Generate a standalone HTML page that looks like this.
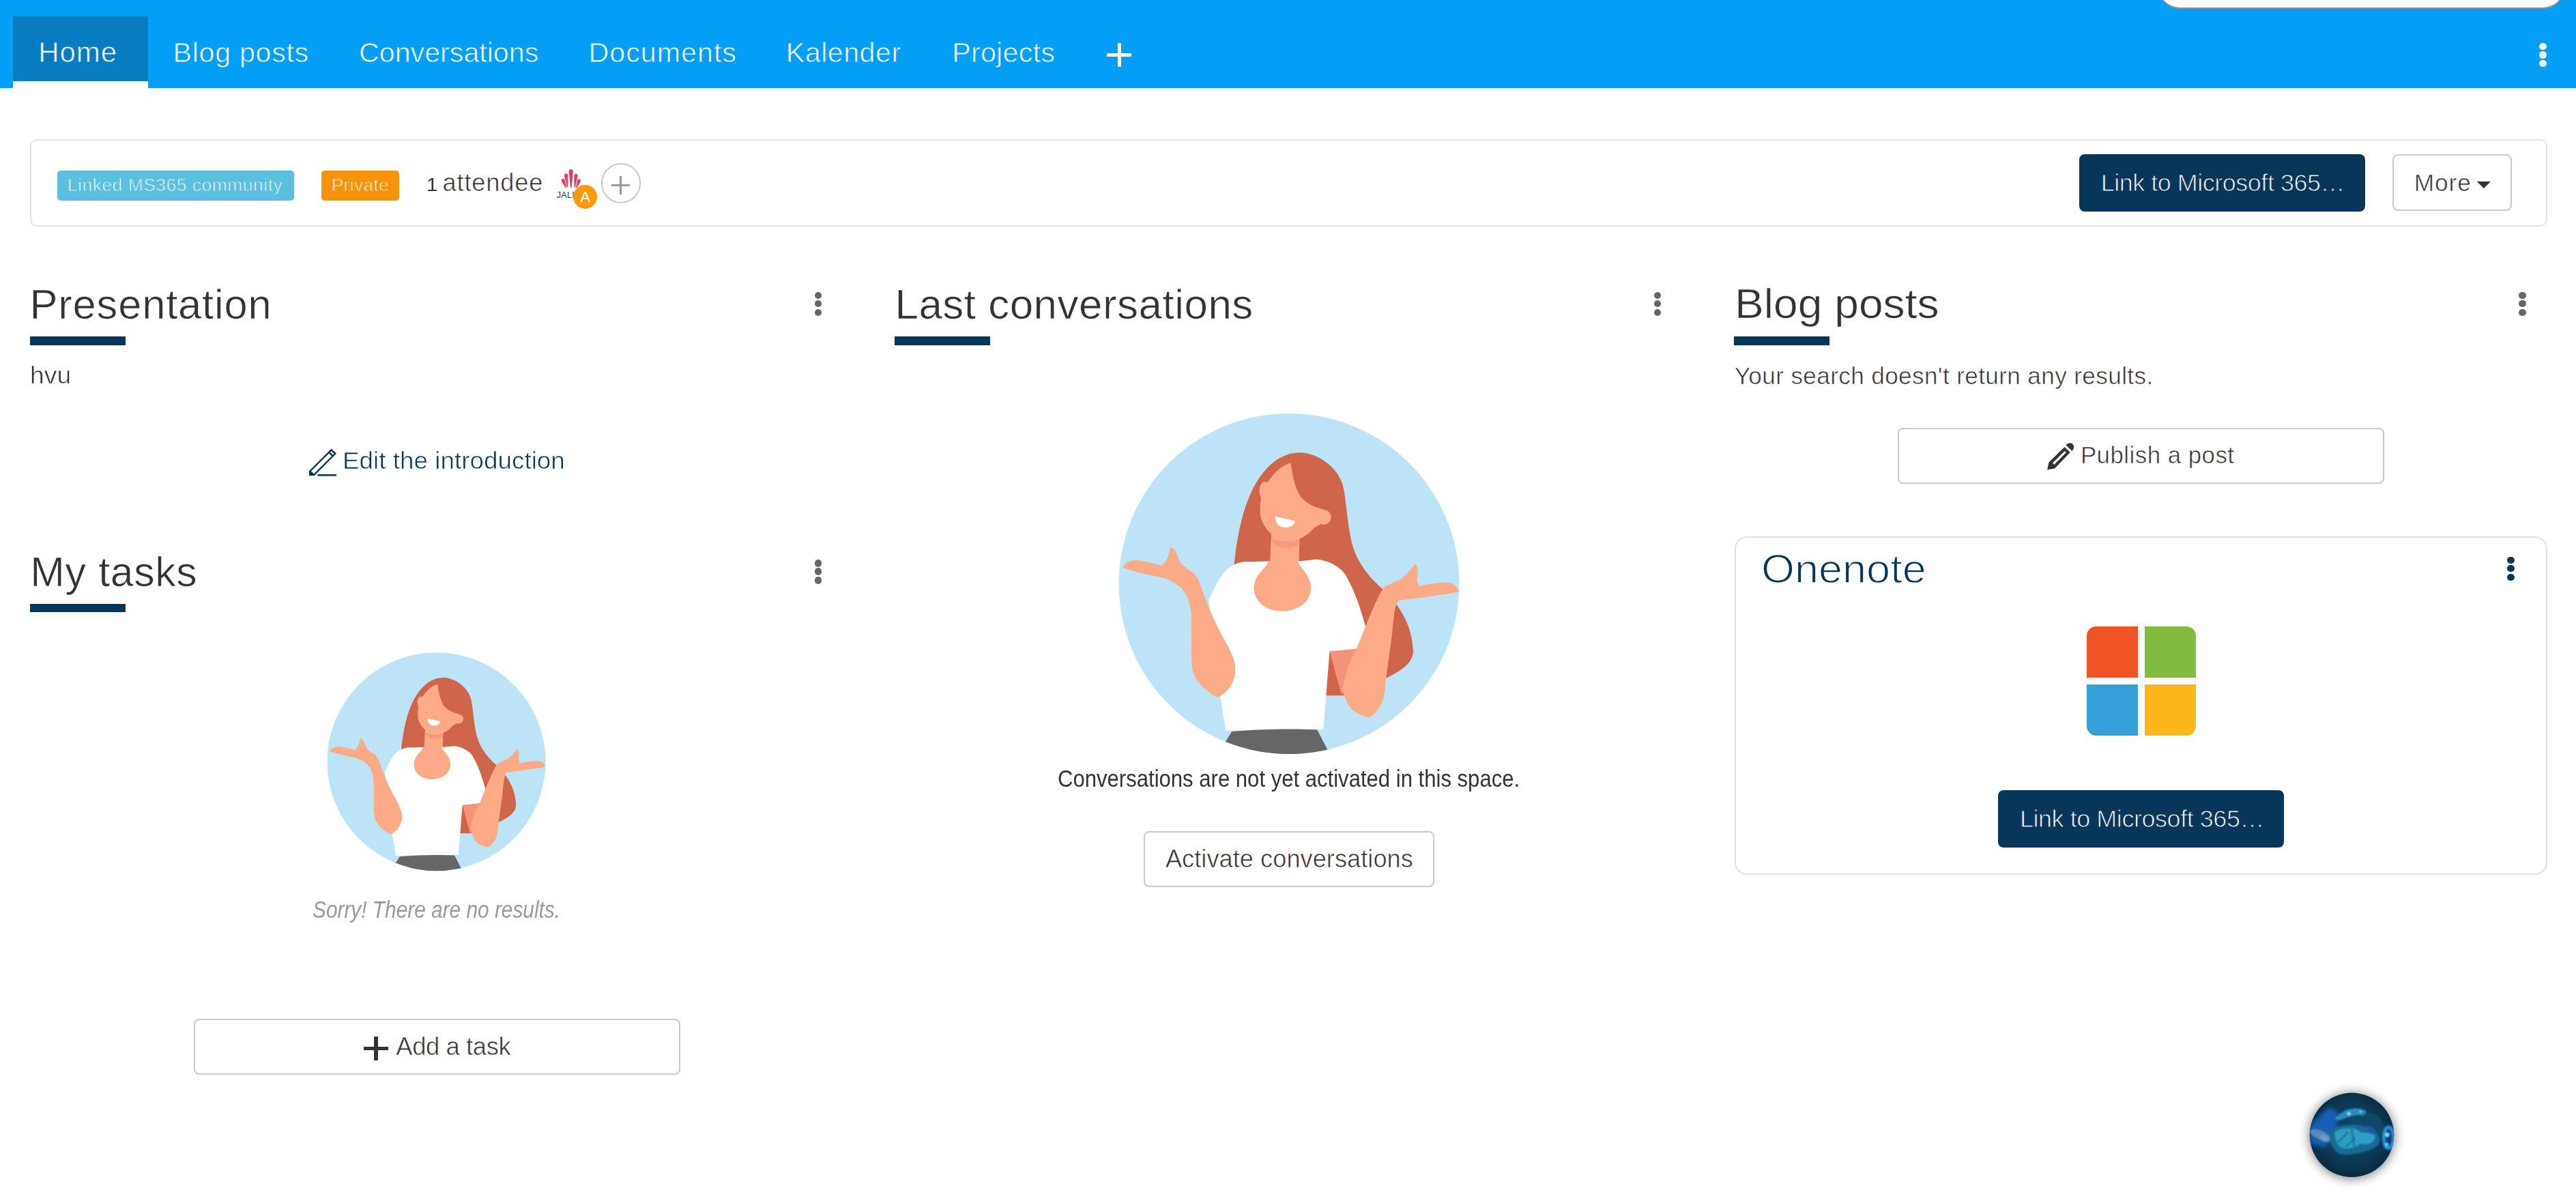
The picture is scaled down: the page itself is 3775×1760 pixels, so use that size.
<!DOCTYPE html>
<html><head><meta charset="utf-8"><title>Space home</title><style>
html,body{margin:0;padding:0;width:3775px;height:1760px;overflow:hidden;background:#fff;font-family:"Liberation Sans",sans-serif;}
.a{position:absolute}
.t{position:absolute;white-space:nowrap;font-family:"Liberation Sans",sans-serif;}
</style></head><body>
<div class="a" style="left:0px;top:0px;width:3775px;height:129px;background:#039ef5;"></div>
<div class="a" style="left:19px;top:24px;width:198px;height:95px;background:#077cc0;"></div>
<div class="a" style="left:19px;top:119px;width:198px;height:10px;background:#fff;"></div>
<div class="t" style="left:56.22px;top:55.82px;font-size:41.96px;line-height:41.96px;color:#fff;letter-spacing:0.95px;-webkit-text-stroke:0.8px #077cc0;">Home</div>
<div class="t" style="left:253.58px;top:56.58px;font-size:41.24px;line-height:41.24px;color:#fff;letter-spacing:0.68px;-webkit-text-stroke:0.8px #039ef5;">Blog posts</div>
<div class="t" style="left:526.07px;top:56.58px;font-size:41.24px;line-height:41.24px;color:#fff;letter-spacing:-0.03px;-webkit-text-stroke:0.8px #039ef5;">Conversations</div>
<div class="t" style="left:862.58px;top:56.58px;font-size:41.24px;line-height:41.24px;color:#fff;letter-spacing:0.98px;-webkit-text-stroke:0.8px #039ef5;">Documents</div>
<div class="t" style="left:1151.78px;top:56.58px;font-size:41.24px;line-height:41.24px;color:#fff;letter-spacing:0.47px;-webkit-text-stroke:0.8px #039ef5;">Kalender</div>
<div class="t" style="left:1395.18px;top:56.58px;font-size:41.24px;line-height:41.24px;color:#fff;letter-spacing:0.25px;-webkit-text-stroke:0.8px #039ef5;">Projects</div>
<div class="a" style="left:1622px;top:78px;width:36px;height:5px;background:#fff;"></div>
<div class="a" style="left:1637.5px;top:63px;width:5.5px;height:35px;background:#fff;"></div>
<div class="a" style="left:3721.2px;top:62.6px;width:10.8px;height:10.8px;border-radius:50%;background:#fff"></div>
<div class="a" style="left:3721.2px;top:75.1px;width:10.8px;height:10.8px;border-radius:50%;background:#fff"></div>
<div class="a" style="left:3721.2px;top:87.6px;width:10.8px;height:10.8px;border-radius:50%;background:#fff"></div>
<div class="a" style="left:3161px;top:-58.5px;width:599px;height:71px;background:#fff;border:2px solid #8f8f8f;border-top:none;box-sizing:border-box;border-radius:0 0 34px 34px"></div>
<div class="a" style="left:44px;top:204px;width:3689px;height:128px;background:#fff;border-radius:10px;border:2px solid #e3e3e3;box-sizing:border-box;"></div>
<div class="a" style="left:84px;top:250px;width:347px;height:44px;background:#5bbfdf;border-radius:5px;"></div>
<div class="a" style="left:471px;top:250px;width:114px;height:44px;background:#f7930b;border-radius:5px;"></div>
<div class="t" style="left:98.83px;top:257.67px;font-size:26.45px;line-height:26.45px;color:#fff;letter-spacing:0.51px;-webkit-text-stroke:0.9px #5bbfdf;">Linked MS365 community</div>
<div class="t" style="left:485.63px;top:257.67px;font-size:26.45px;line-height:26.45px;color:#fff;letter-spacing:0.35px;-webkit-text-stroke:0.9px #f7930b;">Private</div>
<div class="t" style="left:624.54px;top:257.42px;font-size:28.16px;line-height:28.16px;color:#333;transform:scaleX(1.0580);transform-origin:-0px 0;">1</div>
<div class="t" style="left:648.47px;top:250.40px;font-size:36.21px;line-height:36.21px;color:#333;letter-spacing:0.87px;-webkit-text-stroke:0.6px #fff;">attendee</div>
<svg class="a" style="left:810px;top:240px" width="70" height="70" viewBox="0 0 70 70">
<g fill="#e4405f"><path d="M26.00,35.00 L27.60,35.00 L29.90,11.20 L29.79,10.40 L29.48,9.65 L28.99,9.01 L28.35,8.52 L27.60,8.21 L26.80,8.10 L26.00,8.21 L25.25,8.52 L24.61,9.01 L24.12,9.65 L23.81,10.40 L23.70,11.20 Z"/><path d="M20.80,34.58 L22.20,34.42 L22.28,16.71 L22.12,16.02 L21.78,15.41 L21.29,14.90 L20.69,14.53 L20.01,14.33 L19.31,14.32 L18.62,14.48 L18.01,14.82 L17.50,15.31 L17.13,15.91 L16.93,16.59 L16.92,17.29 Z"/><path d="M18.59,35.23 L19.81,34.77 L17.63,23.57 L17.31,22.98 L16.84,22.48 L16.26,22.13 L15.61,21.93 L14.93,21.91 L14.27,22.07 L13.68,22.39 L13.18,22.86 L12.83,23.44 L12.63,24.09 L12.61,24.77 L12.77,25.43 Z"/><path d="M31.50,34.43 L32.90,34.57 L36.68,17.78 L36.67,17.08 L36.47,16.40 L36.10,15.80 L35.59,15.32 L34.97,14.98 L34.28,14.82 L33.58,14.83 L32.90,15.03 L32.30,15.40 L31.82,15.91 L31.48,16.53 L31.32,17.22 Z"/><path d="M33.90,34.76 L35.10,35.24 L40.91,25.97 L41.08,25.31 L41.07,24.63 L40.89,23.98 L40.54,23.39 L40.06,22.92 L39.47,22.59 L38.81,22.42 L38.13,22.43 L37.48,22.61 L36.89,22.96 L36.42,23.44 L36.09,24.03 Z"/></g>
<text x="5.8" y="49.5" font-family="Liberation Sans" font-size="12.5" fill="#0b3a66" letter-spacing="0.3">JALI</text>
<circle cx="47.5" cy="48.4" r="17.5" fill="#fb9a0b"/>
<text x="47.5" y="55.8" text-anchor="middle" font-family="Liberation Sans" font-size="22" fill="#fff">A</text>
</svg>
<div class="a" style="left:880.5px;top:239px;width:58.5px;height:58.5px;border:2px solid #c9c9c9;border-radius:50%;box-sizing:border-box"></div>
<div class="a" style="left:896px;top:269.5px;width:27px;height:3.2px;background:#999;"></div>
<div class="a" style="left:908px;top:258px;width:3.2px;height:27px;background:#999;"></div>
<div class="a" style="left:3047px;top:226px;width:419px;height:84px;background:#07365b;border-radius:8px;"></div>
<div class="t" style="left:3078.69px;top:249.51px;font-size:35.98px;line-height:35.98px;color:#fff;letter-spacing:-0.48px;-webkit-text-stroke:1.0px #07365b;">Link to Microsoft 365…</div>
<div class="a" style="left:3506px;top:226px;width:175px;height:83px;background:#fff;border-radius:8px;border:2px solid #c9c9c9;box-sizing:border-box;"></div>
<div class="t" style="left:3537.64px;top:250.06px;font-size:35.27px;line-height:35.27px;color:#333;letter-spacing:0.98px;-webkit-text-stroke:0.6px #fff;">More</div>
<svg class="a" style="left:3629px;top:265px" width="22" height="12" viewBox="0 0 22 12"><path d="M0.8,1 L21,1 L10.9,11 Z" fill="#333"/></svg>
<div class="t" style="left:43.50px;top:414.98px;font-size:61.44px;line-height:61.44px;color:#333;letter-spacing:0.83px;-webkit-text-stroke:0.6px #fff;">Presentation</div>
<div class="t" style="left:44.26px;top:807.64px;font-size:60.73px;line-height:60.73px;color:#333;letter-spacing:0.70px;-webkit-text-stroke:0.6px #fff;">My tasks</div>
<div class="t" style="left:1311.47px;top:414.97px;font-size:61.87px;line-height:61.87px;color:#333;letter-spacing:0.53px;-webkit-text-stroke:0.6px #fff;">Last conversations</div>
<div class="t" style="left:2541.72px;top:415.42px;font-size:61.16px;line-height:61.16px;color:#333;transform:scaleX(1.0489);transform-origin:-0px 0;-webkit-text-stroke:0.6px #fff;">Blog posts</div>
<div class="a" style="left:44px;top:493px;width:140px;height:13px;background:#07365b;"></div>
<div class="a" style="left:44px;top:885px;width:140px;height:12px;background:#07365b;"></div>
<div class="a" style="left:1311px;top:493px;width:140px;height:13px;background:#07365b;"></div>
<div class="a" style="left:2541px;top:493px;width:140px;height:13px;background:#07365b;"></div>
<div class="a" style="left:1193.8px;top:427.8px;width:10.4px;height:10.4px;border-radius:50%;background:#666"></div>
<div class="a" style="left:1193.8px;top:439.8px;width:10.4px;height:10.4px;border-radius:50%;background:#666"></div>
<div class="a" style="left:1193.8px;top:452.8px;width:10.4px;height:10.4px;border-radius:50%;background:#666"></div>
<div class="a" style="left:1193.8px;top:820.3px;width:10.4px;height:10.4px;border-radius:50%;background:#666"></div>
<div class="a" style="left:1193.8px;top:832.3px;width:10.4px;height:10.4px;border-radius:50%;background:#666"></div>
<div class="a" style="left:1193.8px;top:845.3px;width:10.4px;height:10.4px;border-radius:50%;background:#666"></div>
<div class="a" style="left:2423.8px;top:427.8px;width:10.4px;height:10.4px;border-radius:50%;background:#666"></div>
<div class="a" style="left:2423.8px;top:439.8px;width:10.4px;height:10.4px;border-radius:50%;background:#666"></div>
<div class="a" style="left:2423.8px;top:452.8px;width:10.4px;height:10.4px;border-radius:50%;background:#666"></div>
<div class="a" style="left:3691.3px;top:427.8px;width:10.4px;height:10.4px;border-radius:50%;background:#666"></div>
<div class="a" style="left:3691.3px;top:439.8px;width:10.4px;height:10.4px;border-radius:50%;background:#666"></div>
<div class="a" style="left:3691.3px;top:452.8px;width:10.4px;height:10.4px;border-radius:50%;background:#666"></div>
<div class="t" style="left:43.82px;top:533.07px;font-size:34.86px;line-height:34.86px;color:#333;transform:scaleX(1.0698);transform-origin:-0px 0;-webkit-text-stroke:0.6px #fff;">hvu</div>
<svg class="a" style="left:445px;top:650px" width="60" height="55" viewBox="0 0 60 55">
<path d="M9.2,40.5 L40.5,9.3 L46.4,14.6 L15,46 Z" fill="none" stroke="#07365b" stroke-width="2.4" stroke-linejoin="miter"/>
<path d="M8,40 L8,47 L15.5,47 Z" fill="#07365b"/>
<line x1="36.8" y1="12.6" x2="42.8" y2="18.3" stroke="#07365b" stroke-width="2.4"/>
<line x1="20.5" y1="46.3" x2="48" y2="46.3" stroke="#07365b" stroke-width="2.6"/>
</svg>
<div class="t" style="left:502.22px;top:658.26px;font-size:34.28px;line-height:34.28px;color:#07365b;transform:scaleX(1.0759);transform-origin:-0px 0;-webkit-text-stroke:0.6px #fff;">Edit the introduction</div>
<svg class="a" style="left:467.21px;top:946.33px" width="346.09" height="333.32" viewBox="0 0 1247 1201"><defs><clipPath id="c1"><circle cx="621.5" cy="613.5" r="576.5"/></clipPath></defs>
<circle cx="621.5" cy="613.5" r="576.5" fill="#bde3f7"/>
<g clip-path="url(#c1)">
<path fill="#cf654b" d="M435,556 C445,450 465,360 500,290 C540,215 590,172 654,169 C720,168 790,220 805,285 C815,330 818,400 832,466 C845,520 870,570 941,634 C1000,690 1040,760 1042,843 C1040,880 1010,905 941,938 C900,960 850,980 806,992 L748,992 L700,560 Z"/>
<path fill="#fdab87" d="M562,440 L658,440 L655,545 L557,545 Z"/>
<path fill="#f59a7c" d="M566,460 C590,472 640,472 657,452 L656,478 C640,492 610,496 585,488 C575,482 569,476 566,470 Z"/>
<path fill="#fdab87" d="M550,268 C575,232 600,212 628,204 C632,245 642,290 662,320 C685,345 712,356 742,362 C748,395 735,410 708,423 C680,455 650,470 616,470 C590,470 575,460 562,446 C535,420 524,395 524,370 C522,330 532,292 550,268 Z"/>
<ellipse cx="540" cy="300" rx="19" ry="32" fill="#fdab87"/>
<circle cx="739" cy="388" r="25" fill="#fdab87"/>
<path fill="#fff" d="M574,385 L643,401 C640,420 612,428 593,420 C580,413 575,400 574,385 Z"/>
<path fill="#fff" d="M350,670 C375,610 395,575 420,558 C440,545 455,540 470,539 L557,537 C575,545 640,545 652,537 L716,531 C760,535 800,560 815,587 C845,640 865,700 881,760 L851,834 L759,843 L738,1106 L407,1110 L389,998 Z"/>
<path fill="#fdab87" d="M553,537 C545,560 505,580 503,625 C502,675 545,706 598,706 C652,706 697,675 696,625 C694,585 660,560 650,537 Z"/>
<path fill="#f3947a" d="M759,843 L850,834 L812,960 L800,992 Z"/>
<path fill="#fdab87" d="M58,557 C70,540 90,532 106,533 C140,538 170,548 190,551 C205,545 215,520 219,491 C232,488 242,510 249,533 C262,555 280,566 297,575 C315,595 322,615 327,634 C345,680 360,720 380,760 C410,820 440,860 440,903 C440,950 410,985 380,998 C345,980 300,945 294,900 C288,850 292,780 291,724 C288,670 270,635 243,617 C220,600 190,590 165,587 C130,580 100,572 82,566 C70,563 60,560 58,557 Z"/>
<path fill="#fdab87" d="M941,627 C965,612 985,605 1000,598 C1020,580 1040,560 1048,545 C1058,548 1060,575 1055,600 C1058,612 1062,620 1062,622 C1100,612 1150,608 1168,610 C1185,618 1197,632 1197,640 C1170,648 1120,652 1090,658 C1040,664 1010,668 994,670 C980,680 977,720 970,790 C960,860 952,920 947,960 C945,1000 935,1040 893,1067 C860,1060 830,1040 822,1022 C805,990 800,970 804,962 C815,900 835,860 851,834 C880,760 905,690 941,627 Z"/>
<path fill="#666" d="M407,1147 L428,1114 C530,1105 640,1104 717,1108 L753,1177 L753,1260 L407,1260 Z"/>
</g></svg>
<div class="t" style="left:458.45px;top:1314.86px;font-size:35.27px;line-height:35.27px;color:#999;transform:scaleX(0.8458);transform-origin:-0px 0;font-style:italic;">Sorry! There are no results.</div>
<div class="a" style="left:284px;top:1493px;width:713px;height:82px;background:#fff;border-radius:8px;border:2px solid #c9c9c9;box-sizing:border-box;"></div>
<div class="a" style="left:533px;top:1533.5px;width:36px;height:5.6px;background:#333;"></div>
<div class="a" style="left:548px;top:1519px;width:5.6px;height:35px;background:#333;"></div>
<div class="t" style="left:580.30px;top:1515.90px;font-size:36.41px;line-height:36.41px;color:#333;letter-spacing:-0.41px;-webkit-text-stroke:0.6px #fff;">Add a task</div>
<svg class="a" style="left:1620.02px;top:589.99px" width="539.68" height="519.77" viewBox="0 0 1247 1201"><defs><clipPath id="c2"><circle cx="621.5" cy="613.5" r="576.5"/></clipPath></defs>
<circle cx="621.5" cy="613.5" r="576.5" fill="#bde3f7"/>
<g clip-path="url(#c2)">
<path fill="#cf654b" d="M435,556 C445,450 465,360 500,290 C540,215 590,172 654,169 C720,168 790,220 805,285 C815,330 818,400 832,466 C845,520 870,570 941,634 C1000,690 1040,760 1042,843 C1040,880 1010,905 941,938 C900,960 850,980 806,992 L748,992 L700,560 Z"/>
<path fill="#fdab87" d="M562,440 L658,440 L655,545 L557,545 Z"/>
<path fill="#f59a7c" d="M566,460 C590,472 640,472 657,452 L656,478 C640,492 610,496 585,488 C575,482 569,476 566,470 Z"/>
<path fill="#fdab87" d="M550,268 C575,232 600,212 628,204 C632,245 642,290 662,320 C685,345 712,356 742,362 C748,395 735,410 708,423 C680,455 650,470 616,470 C590,470 575,460 562,446 C535,420 524,395 524,370 C522,330 532,292 550,268 Z"/>
<ellipse cx="540" cy="300" rx="19" ry="32" fill="#fdab87"/>
<circle cx="739" cy="388" r="25" fill="#fdab87"/>
<path fill="#fff" d="M574,385 L643,401 C640,420 612,428 593,420 C580,413 575,400 574,385 Z"/>
<path fill="#fff" d="M350,670 C375,610 395,575 420,558 C440,545 455,540 470,539 L557,537 C575,545 640,545 652,537 L716,531 C760,535 800,560 815,587 C845,640 865,700 881,760 L851,834 L759,843 L738,1106 L407,1110 L389,998 Z"/>
<path fill="#fdab87" d="M553,537 C545,560 505,580 503,625 C502,675 545,706 598,706 C652,706 697,675 696,625 C694,585 660,560 650,537 Z"/>
<path fill="#f3947a" d="M759,843 L850,834 L812,960 L800,992 Z"/>
<path fill="#fdab87" d="M58,557 C70,540 90,532 106,533 C140,538 170,548 190,551 C205,545 215,520 219,491 C232,488 242,510 249,533 C262,555 280,566 297,575 C315,595 322,615 327,634 C345,680 360,720 380,760 C410,820 440,860 440,903 C440,950 410,985 380,998 C345,980 300,945 294,900 C288,850 292,780 291,724 C288,670 270,635 243,617 C220,600 190,590 165,587 C130,580 100,572 82,566 C70,563 60,560 58,557 Z"/>
<path fill="#fdab87" d="M941,627 C965,612 985,605 1000,598 C1020,580 1040,560 1048,545 C1058,548 1060,575 1055,600 C1058,612 1062,620 1062,622 C1100,612 1150,608 1168,610 C1185,618 1197,632 1197,640 C1170,648 1120,652 1090,658 C1040,664 1010,668 994,670 C980,680 977,720 970,790 C960,860 952,920 947,960 C945,1000 935,1040 893,1067 C860,1060 830,1040 822,1022 C805,990 800,970 804,962 C815,900 835,860 851,834 C880,760 905,690 941,627 Z"/>
<path fill="#666" d="M407,1147 L428,1114 C530,1105 640,1104 717,1108 L753,1177 L753,1260 L407,1260 Z"/>
</g></svg>
<div class="t" style="left:1550.35px;top:1122.66px;font-size:35.27px;line-height:35.27px;color:#333;transform:scaleX(0.8812);transform-origin:-0px 0;">Conversations are not yet activated in this space.</div>
<div class="a" style="left:1676px;top:1218px;width:426px;height:82px;background:#fff;border-radius:8px;border:2px solid #c9c9c9;box-sizing:border-box;"></div>
<div class="t" style="left:1707.90px;top:1240.84px;font-size:36.12px;line-height:36.12px;color:#333;letter-spacing:0.08px;-webkit-text-stroke:0.6px #fff;">Activate conversations</div>
<div class="t" style="left:2541.75px;top:532.54px;font-size:35.13px;line-height:35.13px;color:#333;letter-spacing:0.38px;-webkit-text-stroke:0.6px #fff;">Your search doesn't return any results.</div>
<div class="a" style="left:2781px;top:627px;width:713px;height:82px;background:#fff;border-radius:8px;border:2px solid #c9c9c9;box-sizing:border-box;"></div>
<svg class="a" style="left:2990px;top:640px" width="60" height="55" viewBox="0 0 60 55">
<path d="M35.5,14.9 L43.7,23.1 L21.1,46.5 L10.1,48.6 L12.4,37.6 Z M18.1,38.5 L20.4,40.8 L38,23.1 L35.7,21.1 Z" fill="#333" fill-rule="evenodd"/>
<path d="M37.5,12.3 C40,9.3 44,8.3 47,10.5 C50,13 49.8,17.5 46.5,20.9 Z" fill="#333"/>
</svg>
<div class="t" style="left:3048.88px;top:650.08px;font-size:34.84px;line-height:34.84px;color:#333;letter-spacing:0.49px;-webkit-text-stroke:0.6px #fff;">Publish a post</div>
<div class="a" style="left:2542px;top:786px;width:1191px;height:496px;background:#fff;border-radius:18px;border:2px solid #e0e0e0;box-sizing:border-box;"></div>
<div class="t" style="left:2580.51px;top:804.20px;font-size:59.59px;line-height:59.59px;color:#07365b;transform:scaleX(1.0573);transform-origin:-0px 0;-webkit-text-stroke:1.4px #fff;">Onenote</div>
<div class="a" style="left:3674.4px;top:815.9px;width:10.2px;height:10.2px;border-radius:50%;background:#07365b"></div>
<div class="a" style="left:3674.4px;top:827.9px;width:10.2px;height:10.2px;border-radius:50%;background:#07365b"></div>
<div class="a" style="left:3674.4px;top:840.9px;width:10.2px;height:10.2px;border-radius:50%;background:#07365b"></div>
<div class="a" style="left:3058px;top:918px;width:75px;height:75px;background:#f05325;border-radius:14px 0 0 0"></div>
<div class="a" style="left:3143px;top:918px;width:75px;height:75px;background:#81bc41;border-radius:0 14px 0 0"></div>
<div class="a" style="left:3058px;top:1003px;width:75px;height:75px;background:#33a0da;border-radius:0 0 0 14px"></div>
<div class="a" style="left:3143px;top:1003px;width:75px;height:75px;background:#fcb81a;border-radius:0 0 14px 0"></div>
<div class="a" style="left:2928px;top:1158px;width:419px;height:84px;background:#07365b;border-radius:8px;"></div>
<div class="t" style="left:2959.89px;top:1181.51px;font-size:35.98px;line-height:35.98px;color:#fff;letter-spacing:-0.44px;-webkit-text-stroke:1.0px #07365b;">Link to Microsoft 365…</div>
<svg class="a" style="left:3360px;top:1577px" width="172" height="172" viewBox="-182 -182 1565 1565">
<defs>
<radialGradient id="bbg" cx="0.5" cy="0.48" r="0.5"><stop offset="0" stop-color="#0f4763"/><stop offset="0.7" stop-color="#0b3a55"/><stop offset="1" stop-color="#082d45"/></radialGradient>
<filter id="bbl" x="-50%" y="-50%" width="200%" height="200%"><feGaussianBlur stdDeviation="30"/></filter>
<filter id="bbl2" x="-50%" y="-50%" width="200%" height="200%"><feGaussianBlur stdDeviation="8"/></filter>
<filter id="bsh" x="-50%" y="-50%" width="200%" height="200%"><feGaussianBlur stdDeviation="75"/></filter>
<clipPath id="bcl"><circle cx="605" cy="603" r="562"/></clipPath>
</defs>
<circle cx="605" cy="615" r="570" fill="#000" opacity="0.5" filter="url(#bsh)"/>
<circle cx="605" cy="603" r="562" fill="url(#bbg)"/>
<g clip-path="url(#bcl)">
<path d="M40,480 L300,230 L430,300 L390,560 L250,770 L40,720 Z" fill="#1f66c4" opacity="0.85" filter="url(#bbl)"/>
<g filter="url(#bbl2)">
<path d="M1000,470 L1160,480 L1180,790 L1010,800 Z" fill="#0c3e6e"/>
<path d="M560,330 C700,280 880,280 980,380 C1030,450 1030,560 1000,650 C960,760 880,800 760,830 L600,840 L560,600 Z" fill="#0f4a66"/>
<path d="M370,390 C420,330 500,270 580,255 C650,240 740,245 790,280 C800,310 780,340 740,340 C660,330 600,340 540,370 C480,400 420,420 370,390 Z" fill="#2a8cc4"/>
<path d="M280,580 C330,520 420,480 520,470 C640,460 760,470 860,520 C960,570 1000,650 960,730 C900,800 760,840 620,860 C520,875 440,870 390,820 C330,760 290,680 280,580 Z" fill="#176a95"/>
<path d="M380,560 C450,510 560,500 650,520 C720,540 760,600 740,680 C700,760 600,790 500,780 C420,760 370,680 380,560 Z" fill="#2f9ec4"/>
<path d="M420,700 L560,560 M520,760 L700,600 M600,520 L640,760" stroke="#0e3f5c" stroke-width="22" fill="none" opacity="0.5"/>
<path d="M650,600 C720,560 820,560 900,600 C930,640 900,700 840,720 C760,740 690,720 650,680 Z" fill="#2fa0c8"/>
<ellipse cx="180" cy="600" rx="140" ry="60" transform="rotate(22 180 600)" fill="#5a86b8"/>
<ellipse cx="240" cy="650" rx="70" ry="40" transform="rotate(22 240 650)" fill="#6f9cc8"/>
<path d="M800,470 C860,480 920,520 930,580 C900,600 850,590 820,560 Z" fill="#1c56a8"/>
<ellipse cx="1095" cy="640" rx="65" ry="140" fill="none" stroke="#2492e0" stroke-width="42"/>
<circle cx="1075" cy="600" r="28" fill="#7fe0ff"/>
<circle cx="1070" cy="730" r="24" fill="#5fcfff"/>
<circle cx="565" cy="320" r="22" fill="#8fe6ff"/>
<circle cx="720" cy="292" r="16" fill="#7fd8f8"/>
</g>
</g>
</svg>
</body></html>
